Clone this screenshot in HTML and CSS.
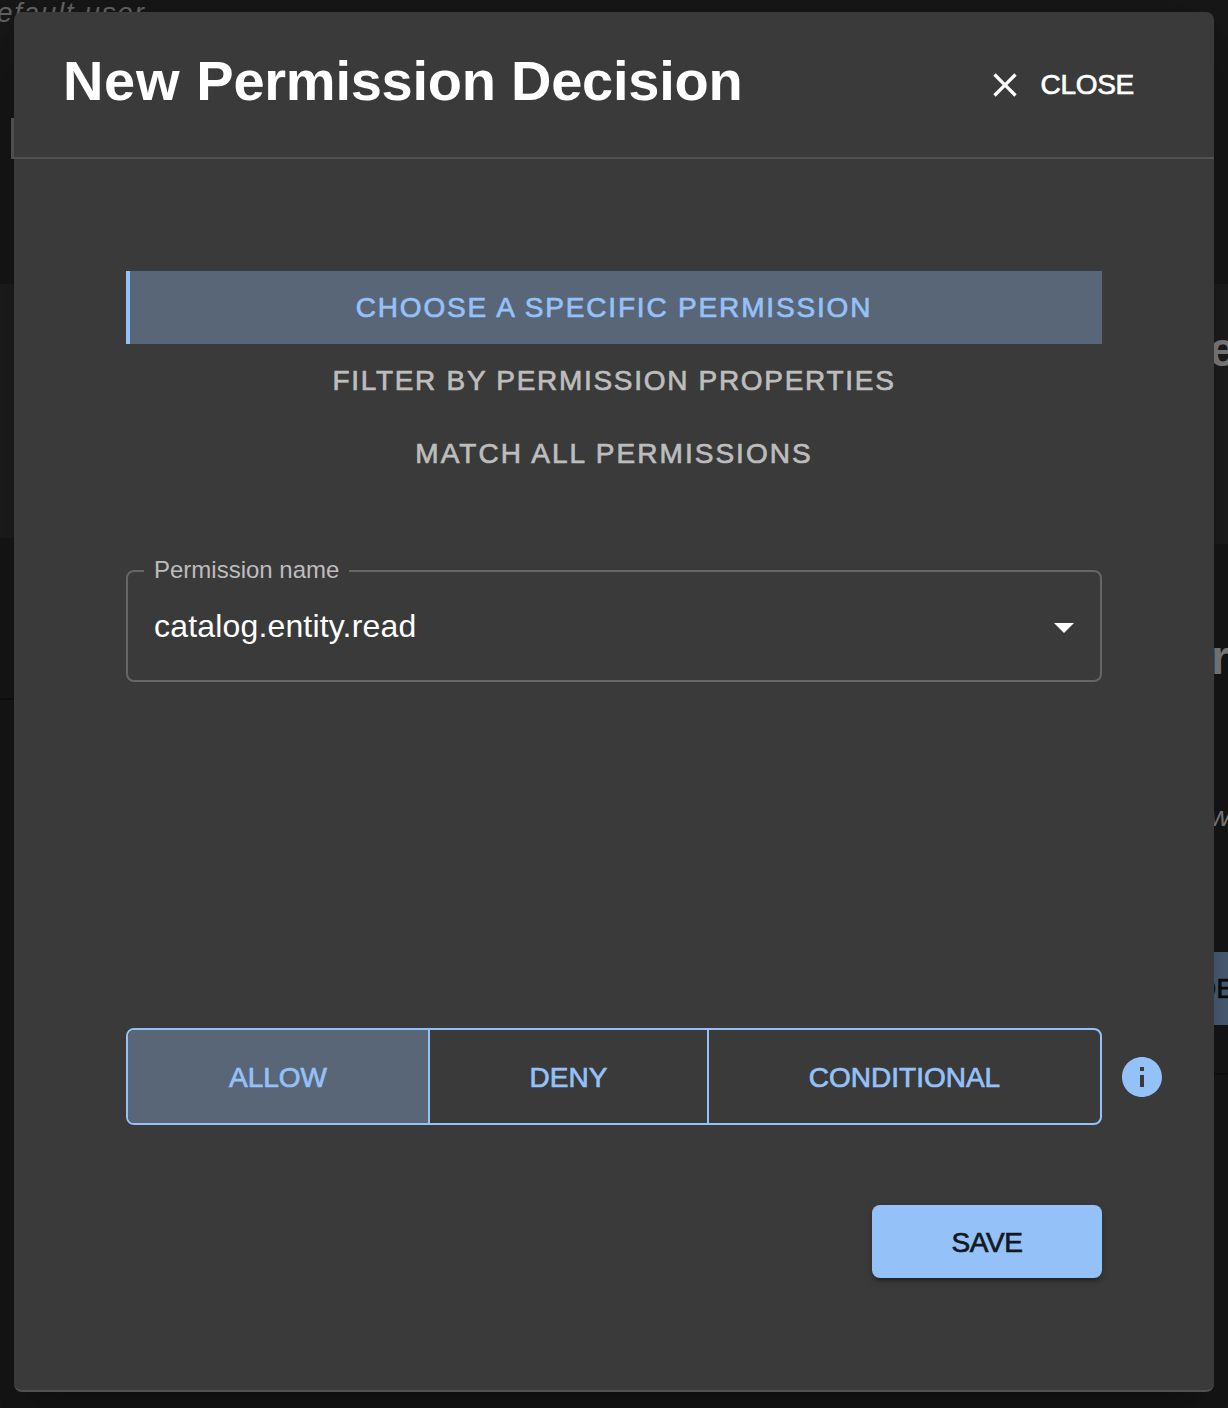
FILE: index.html
```html
<!DOCTYPE html>
<html lang="en">
<head>
<meta charset="utf-8">
<title>New Permission Decision</title>
<link rel="stylesheet" href="styles.css">
</head>
<body>
<div class="page" aria-hidden="true">
  <div class="band band-left"></div>
  <div class="band band-right"></div>
  <div class="rule rule-left"></div>
  <div class="rule rule-right"></div>
  <div class="marker"></div>
  <span class="under under-user">efault user</span>
  <span class="under under-head under-e">e</span>
  <span class="under under-head under-r">r</span>
  <span class="under under-w">w</span>
  <div class="under-button">DE</div>
</div>
<main class="dialog" role="dialog" aria-labelledby="title">
  <header class="header">
    <h2 class="title" id="title"><span class="title-lead">New </span>Permission Decision</h2>
    <button class="close">
      <svg class="close-icon" viewBox="0 0 24 24"><path d="M19 6.41L17.59 5 12 10.59 6.41 5 5 6.41 10.59 12 5 17.59 6.41 19 12 13.41 17.59 19 19 17.59 13.41 12z"/></svg>
      <span>CLOSE</span>
    </button>
  </header>
  <section class="content">
    <div class="tabs">
      <button class="tab tab-active">CHOOSE A SPECIFIC PERMISSION</button>
      <button class="tab tab-filter">FILTER BY PERMISSION PROPERTIES</button>
      <button class="tab tab-all">MATCH ALL PERMISSIONS</button>
    </div>
    <fieldset class="field">
      <legend class="legend">Permission name</legend>
      <div class="select">
        <span>catalog.entity.read</span>
        <svg class="arrow" viewBox="0 0 24 24"><path d="M7 10l5 5 5-5z"/></svg>
      </div>
    </fieldset>
    <div class="decision">
      <div class="group">
        <button class="option option-active">ALLOW</button>
        <button class="option">DENY</button>
        <button class="option">CONDITIONAL</button>
      </div>
      <svg class="info" viewBox="0 0 24 24"><path d="M12 2C6.48 2 2 6.48 2 12s4.480 10 10 10 10-4.480 10-10S17.520 2 12 2zm1 15h-2v-6h2v6zm0-8h-2V7h2v2z"/></svg>
    </div>
    <button class="save">SAVE</button>
  </section>
</main>
</body>
</html>
```
FILE: styles.css
```css
* { box-sizing: border-box; }
body {
  margin: 0;
  width: 1228px;
  height: 1408px;
  padding: 12px 14px 16px;
  overflow: hidden;
  background: #181818;
  font-family: "Liberation Sans", Arial, sans-serif;
  color: #fff;
}
button {
  margin: 0;
  padding: 0;
  border: 0;
  background: none;
  color: inherit;
  font: 400 28px/49px "Liberation Sans", Arial, sans-serif;
  -webkit-text-stroke: 0.7px currentColor;
}

/* page content dimmed behind the dialog */
.page { position: absolute; inset: 0; overflow: hidden; }
.band { position: absolute; width: 614px; background: #1f1f1f; }
.band-left { left: 0; top: 284px; height: 254px; }
.band-right { right: 0; top: 284px; height: 260px; }
.rule { position: absolute; width: 614px; height: 2px; background: #121212; }
.rule-left { left: 0; top: 698px; }
.rule-right { right: 0; top: 1073px; }
.marker { position: absolute; left: 11px; top: 118px; width: 4px; height: 41px; background: #606060; }
.under { position: absolute; color: #868686; white-space: nowrap; }
.under-user { left: -3px; top: -5px; font: italic 28px/36px "Liberation Sans", Arial, sans-serif; letter-spacing: 1.6px; color: #646464; }
.under-head { font-size: 48px; line-height: 56px; font-weight: 700; }
.under-e { left: 1209px; top: 322px; }
.under-r { left: 1211px; top: 630px; }
.under-w { left: 1210px; top: 799px; font-size: 28px; line-height: 36px; font-style: italic; }
.under-button {
  position: absolute;
  left: 1140px;
  top: 952px;
  width: 100px;
  height: 73px;
  padding-left: 56px;
  background: #51657f;
  color: #0b0d10;
  font-size: 28px;
  line-height: 74px;
  -webkit-text-stroke: 0.7px currentColor;
}

.dialog {
  position: relative;
  height: 1380px;
  overflow: hidden;
  border-radius: 8px;
  border-bottom: 2px solid #515151;
  background: #3a3a3a;
  box-shadow: 0 22px 30px -14px rgba(0, 0, 0, .2), 0 48px 76px 6px rgba(0, 0, 0, .14), 0 18px 92px 16px rgba(0, 0, 0, .12);
}
.header {
  display: flex;
  justify-content: space-between;
  align-items: flex-start;
  height: 147px;
  padding: 36px 80px 0 49px;
  border-bottom: 2px solid #515151;
}
.title { margin: 0; font-size: 56px; line-height: 66px; font-weight: 700; letter-spacing: -.25px; }
.title-lead { letter-spacing: .65px; }
.close { display: flex; align-items: center; gap: 16px; padding-top: 12px; letter-spacing: -.3px; }
.close-icon { width: 40px; height: 40px; fill: #fff; }

.content { display: flex; flex-direction: column; padding: 112px 112px 0; }
.tabs { display: flex; flex-direction: column; }
.tab { height: 73px; color: #bdbdbd; line-height: 73px; letter-spacing: 1.83px; }
.tab-active { background: #596677; color: #95c1f9; box-shadow: inset 4px 0 #95c1f9; }
.tab-filter { letter-spacing: 1.7px; }
.tab-all { letter-spacing: 2.03px; }

.field {
  height: 126px;
  margin: 66px 0 0;
  padding: 0 24px 0 16px;
  border: 2px solid #666;
  border-radius: 8px;
}
.legend { height: 30px; padding: 0 10px; color: #bdbdbd; font-size: 24px; line-height: 28px; }
.select { display: flex; justify-content: space-between; align-items: center; height: 81px; padding-left: 10px; font-size: 32px; letter-spacing: .17px; }
.arrow { width: 48px; height: 48px; margin-right: -12px; fill: #fff; }

.decision { display: flex; align-items: center; width: 1040px; margin-top: 346px; }
.group {
  display: grid;
  grid-template-columns: 302px 279px 1fr;
  width: 976px;
  height: 97px;
  overflow: hidden;
  border: 2px solid #95c1f9;
  border-radius: 8px;
}
.option { padding-top: 2px; border-right: 2px solid #95c1f9; color: #95c1f9; }
.option:last-child { border-right: 0; }
.option-active { background: #596677; }
.info { width: 48px; height: 48px; margin-left: 16px; fill: #95c1f9; }
.save {
  align-self: flex-end;
  width: 230px;
  height: 73px;
  margin-top: 80px;
  padding-top: 2px;
  border-radius: 8px;
  background: #95c1f9;
  color: #13191f;
  letter-spacing: -.4px;
  box-shadow: 0 6px 2px -4px rgba(0, 0, 0, .2), 0 4px 4px rgba(0, 0, 0, .14), 0 2px 10px rgba(0, 0, 0, .12);
}
```
